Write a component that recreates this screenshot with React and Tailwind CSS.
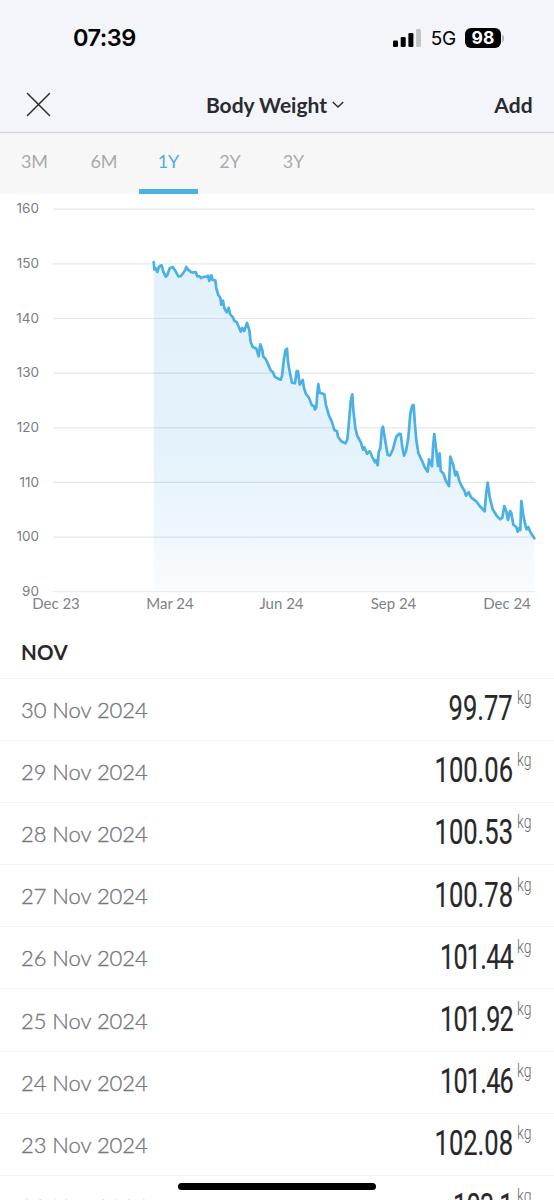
import { clsx } from "clsx";

const ranges = [
  { label: "3M", width: "w-[69px]" },
  { label: "6M", width: "w-[70px]" },
  { label: "1Y", width: "w-[59px]" },
  { label: "2Y", width: "w-[64px]" },
  { label: "3Y", width: "w-[63px]" },
];

const entries = [
  { date: "30 Nov 2024", weight: "99.77" },
  { date: "29 Nov 2024", weight: "100.06" },
  { date: "28 Nov 2024", weight: "100.53" },
  { date: "27 Nov 2024", weight: "100.78" },
  { date: "26 Nov 2024", weight: "101.44" },
  { date: "25 Nov 2024", weight: "101.92" },
  { date: "24 Nov 2024", weight: "101.46" },
  { date: "23 Nov 2024", weight: "102.08" },
  { date: "22 Nov 2024", weight: "103.1" },
];

const yTicks = [160, 150, 140, 130, 120, 110, 100, 90];

const xTicks = [
  { label: "Dec 23", x: 56 },
  { label: "Mar 24", x: 170 },
  { label: "Jun 24", x: 281.5 },
  { label: "Sep 24", x: 393.5 },
  { label: "Dec 24", x: 507 },
];

const points = [
  [153.7, 262], [154.3, 269.3], [155.7, 268.3], [157.3, 272], [159, 266.7], [161.7, 265.3], [163.3, 271.7],
  [165.7, 276.7], [167.3, 275], [169.7, 268.3], [172.7, 266.9], [175.3, 270.7], [178.3, 276.3], [181, 276],
  [183.3, 272.7], [185.3, 270], [186.3, 266.9], [188, 269.6], [191.7, 272.5], [195.7, 272.1], [197.3, 276.3],
  [199.3, 276], [201, 278.1], [203.3, 276.9], [207, 276.7], [208, 275.6], [209.3, 281], [211.3, 275.3],
  [212.7, 280], [215.3, 280.3], [216.3, 288.3], [218.3, 295], [220.3, 297.8], [221.3, 304.7], [223, 300.7],
  [224.3, 308], [226.7, 312.3], [228.7, 307.7], [230, 314], [233, 317.3], [234.3, 321], [236.7, 322],
  [238.7, 326.7], [240.7, 331.6], [242.3, 328], [244.3, 331], [247, 323], [249.3, 330], [250.7, 342],
  [252.7, 347], [256.3, 348.6], [258.7, 356.3], [260.3, 344.3], [262.3, 350], [263.3, 356.6], [265.7, 359],
  [268, 364], [270.7, 370.3], [273, 372.3], [274.7, 376.6], [278, 378.6], [280.7, 379.7], [282, 376],
  [283.7, 361], [285.3, 350.7], [287, 348.6], [288, 362], [290, 373.3], [292, 382.7], [295, 383.3],
  [296.7, 371], [298, 371], [299.7, 384.7], [302.7, 380], [304, 388], [306, 394], [309, 397.6],
  [311.7, 405], [313.7, 406], [315, 409.6], [316.3, 407.3], [317.3, 393.3], [318.3, 384], [319.7, 392.7],
  [324.3, 394.3], [326, 405], [329, 415.7], [332, 422], [334.3, 430], [337, 431.3], [338, 436.7],
  [341.3, 441.3], [345.3, 443.3], [347.3, 439.7], [348.7, 425], [350.7, 401], [352.3, 394.3], [353.3, 410],
  [355.3, 427.7], [357.3, 436], [361, 442.7], [363, 449.7], [364.3, 447.3], [367, 453.7], [369.7, 451.3],
  [372.3, 457], [375, 462.3], [376.3, 460], [377.7, 465.3], [378.7, 452], [380.3, 448], [382, 428],
  [383, 426.7], [385.3, 441], [387.7, 455], [390, 455.3], [392.7, 450], [396.3, 436.7], [399.3, 433.7],
  [400.7, 434], [402.3, 447], [404, 455.7], [406, 451], [408.3, 438], [410.3, 414], [412, 406],
  [413.6, 405], [414.7, 421], [416.3, 440], [418.3, 453], [421.7, 460.3], [425, 467.7], [427.7, 471.7],
  [429, 459.3], [432, 466.3], [433, 447], [434.3, 434], [436.3, 451], [438, 466], [439.7, 453.3],
  [440.7, 471], [443.3, 473.3], [445.7, 480.3], [449, 486], [450.3, 456.7], [453.3, 465], [455.3, 475.3],
  [457, 472], [459, 480], [461.7, 486.3], [464.7, 491.3], [466, 495.7], [468.7, 492.3], [471, 497.3],
  [476.3, 501.3], [479.7, 506], [484.7, 511.3], [486, 494.7], [487.7, 482.7], [489.7, 497.3], [492.7, 509.3],
  [497, 516.3], [500.3, 519.3], [502.3, 517.7], [504.3, 506], [506.3, 511], [508, 520], [510, 511],
  [511.3, 513], [513.3, 524.7], [516.3, 527], [517.7, 531.7], [519, 528.3], [520.3, 530], [521.3, 501],
  [523.3, 515], [525.7, 526.7], [526.7, 529.3], [528.3, 527], [530.3, 532], [534.3, 538.3],
];

const line = points.map(([x, y]) => `${x},${y}`).join(" ");
const area = `153.7,591.5 ${line} 534.3,591.5`;

function StatusBar() {
  return (
    <div className="flex h-[76px] items-center justify-between pl-[73px] pr-[50px] text-black font-['Inter',sans-serif]">
      <span className="text-[23.5px] font-semibold tracking-[-0.5px]">07:39</span>
      <div className="flex items-center">
        <svg width="28" height="18" viewBox="0 0 28 18">
          <rect x="0" y="11.5" width="5" height="6.5" rx="1.3" />
          <rect x="7.7" y="8" width="5" height="10" rx="1.3" />
          <rect x="15.4" y="4" width="5" height="14" rx="1.3" />
          <rect x="23.1" y="0" width="5" height="18" rx="1.3" fill="#c3c4c7" />
        </svg>
        <span className="ml-[10px] text-[19px] leading-none tracking-[-0.3px]">5G</span>
        <span className="ml-[9px] flex h-5 w-9 items-center justify-center rounded-md bg-black text-[17.5px] font-bold leading-none text-white">
          98
        </span>
        <span className="ml-px h-[7px] w-[2px] rounded-r-full bg-[#b5b6b9]" />
      </div>
    </div>
  );
}

function Header() {
  return (
    <div className="grid h-[57px] grid-cols-[1fr_auto_1fr] items-center border-b border-[#cfd2d7] pl-[26px] pr-[21px] text-[#2a2b2f]">
      <svg width="25" height="25" viewBox="0 0 25 25" fill="none" stroke="currentColor" strokeWidth="1.5" strokeLinecap="round">
        <path d="M1.5 1.5l22 22M23.5 1.5l-22 22" />
      </svg>
      <div className="mr-[9px] flex items-center gap-[5px] pt-px">
        <span className="text-[21px] font-bold">Body Weight</span>
        <svg width="12" height="8" viewBox="0 0 12 8" fill="none" stroke="currentColor" strokeWidth="1.4">
          <path d="M0.8 1l5.2 5 5.2-5" />
        </svg>
      </div>
      <span className="pt-px text-right text-[21px] font-bold tracking-[0.2px]">Add</span>
    </div>
  );
}

function RangeTabs() {
  return (
    <div className="flex h-[61px] bg-[#f7f7f7]">
      {ranges.map(({ label, width }) => (
        <div
          key={label}
          className={clsx(
            "flex justify-center border-b-[5px] pt-[15px] text-[18px]",
            width,
            label === "1Y" ? "border-[#4bb1e4] text-[#4bb1e4]" : "border-transparent text-[#a9aaae]"
          )}
        >
          {label}
        </div>
      ))}
    </div>
  );
}

function WeightChart() {
  return (
    <svg className="block" width="554" height="426" viewBox="0 194 554 426">
      <defs>
        <linearGradient id="fill" x1="0" y1="262" x2="0" y2="591" gradientUnits="userSpaceOnUse">
          <stop offset="0" stopColor="#e2f1fa" />
          <stop offset="0.55" stopColor="#e3f2fb" />
          <stop offset="0.8" stopColor="#eef6fc" />
          <stop offset="1" stopColor="#f9fcfe" />
        </linearGradient>
      </defs>
      <polygon points={area} fill="url(#fill)" />
      {yTicks.map((tick, i) => (
        <g key={tick}>
          <line x1="53" x2="535" y1={209.2 + i * 54.65} y2={209.2 + i * 54.65} stroke="#5a6068" strokeOpacity="0.15" strokeWidth="1.2" />
          <text
            x="39"
            y={213.3 + i * 54.65}
            textAnchor="end"
            className="fill-[#7b7c85] text-[13.5px] font-['Inter',sans-serif]"
          >
            {tick}
          </text>
        </g>
      ))}
      <polyline points={line} fill="none" stroke="#4bb0e4" strokeWidth="2.7" strokeLinejoin="round" strokeLinecap="round" />
      {xTicks.map(({ label, x }) => (
        <text key={label} x={x} y="609" textAnchor="middle" className="fill-[#808188] text-[15px]">
          {label}
        </text>
      ))}
    </svg>
  );
}

function EntryRow({ date, weight }) {
  // values with a second "1" run narrower
  const narrow = weight.lastIndexOf("1") > 0;

  return (
    <li className="flex h-[62.2px] items-center justify-between border-t border-[#f3f3f4] pb-[2px] pl-[21px] pr-6">
      <span className="pt-[2px] text-[22px] font-light tracking-[-0.05px] text-[#77787d] [-webkit-text-stroke:0.35px_#77787d]">
        {date}
      </span>
      <div className="flex items-start font-['Roboto',sans-serif]">
        <span
          className={clsx(
            "origin-right text-[34.5px] leading-[34px] text-[#28282a] [-webkit-text-stroke:0.2px_#28282a]",
            narrow ? "mr-px scale-x-[0.73] tracking-[-1px]" : "scale-x-[0.74]"
          )}
        >
          {weight}
        </span>
        <span
          className={clsx(
            "-mt-px w-[13px] origin-left scale-x-[0.8] text-[17.5px] font-light leading-none text-[#66676b]",
            narrow ? "ml-[3px]" : "ml-1"
          )}
        >
          kg
        </span>
      </div>
    </li>
  );
}

export default function App() {
  return (
    <div className="relative h-[1200px] w-[554px] overflow-hidden bg-white font-['Lato',sans-serif]">
      <header className="bg-[#f4f5fa]">
        <StatusBar />
        <Header />
      </header>
      <RangeTabs />
      <WeightChart />
      <h2 className="flex h-[57.5px] items-center pl-[21px] pt-[8px] text-[20.5px] font-bold tracking-[0.3px] text-[#28282a]">NOV</h2>
      <ul>
        {entries.map((entry) => (
          <EntryRow key={entry.date} {...entry} />
        ))}
      </ul>
      <div className="absolute bottom-[10px] left-[178px] h-[7px] w-[198px] rounded-full bg-black" />
    </div>
  );
}
